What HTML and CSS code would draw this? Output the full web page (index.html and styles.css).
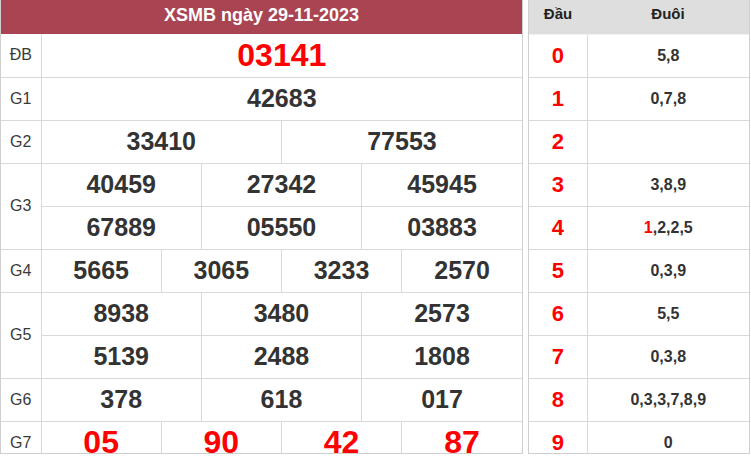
FILE: index.html
```html
<!DOCTYPE html>
<html lang="vi">
<head>
<meta charset="utf-8">
<title>XSMB ngày 29-11-2023</title>
<link rel="stylesheet" href="styles.css">
</head>
<body>
<div class="wrap">
  <div class="panel panel-main">
    <table class="kq">
      <colgroup>
        <col class="c-label">
        <col class="c-unit"><col class="c-unit"><col class="c-unit"><col class="c-unit">
        <col class="c-unit"><col class="c-unit"><col class="c-unit"><col class="c-unit">
        <col class="c-unit"><col class="c-unit"><col class="c-unit"><col class="c-unit">
      </colgroup>
      <thead>
        <tr class="head-row"><th colspan="13" class="title">XSMB ngày 29-11-2023</th></tr>
      </thead>
      <tbody>
        <tr><td class="lbl">ĐB</td><td colspan="12" class="num big red">03141</td></tr>
        <tr><td class="lbl">G1</td><td colspan="12" class="num">42683</td></tr>
        <tr><td class="lbl">G2</td><td colspan="6" class="num">33410</td><td colspan="6" class="num">77553</td></tr>
        <tr><td class="lbl" rowspan="2">G3</td><td colspan="4" class="num">40459</td><td colspan="4" class="num">27342</td><td colspan="4" class="num">45945</td></tr>
        <tr><td colspan="4" class="num">67889</td><td colspan="4" class="num">05550</td><td colspan="4" class="num">03883</td></tr>
        <tr><td class="lbl">G4</td><td colspan="3" class="num">5665</td><td colspan="3" class="num">3065</td><td colspan="3" class="num">3233</td><td colspan="3" class="num">2570</td></tr>
        <tr><td class="lbl" rowspan="2">G5</td><td colspan="4" class="num">8938</td><td colspan="4" class="num">3480</td><td colspan="4" class="num">2573</td></tr>
        <tr><td colspan="4" class="num">5139</td><td colspan="4" class="num">2488</td><td colspan="4" class="num">1808</td></tr>
        <tr><td class="lbl">G6</td><td colspan="4" class="num">378</td><td colspan="4" class="num">618</td><td colspan="4" class="num">017</td></tr>
        <tr><td class="lbl">G7</td><td colspan="3" class="num big red">05</td><td colspan="3" class="num big red">90</td><td colspan="3" class="num big red">42</td><td colspan="3" class="num big red">87</td></tr>
      </tbody>
    </table>
  </div>
  <div class="panel panel-side">
    <table class="loto">
      <colgroup><col class="c-dau"><col class="c-duoi"></colgroup>
      <thead>
        <tr class="head-row"><th>Đầu</th><th>Đuôi</th></tr>
      </thead>
      <tbody>
        <tr><td class="dau">0</td><td class="duoi">5,8</td></tr>
        <tr><td class="dau">1</td><td class="duoi">0,7,8</td></tr>
        <tr><td class="dau">2</td><td class="duoi"></td></tr>
        <tr><td class="dau">3</td><td class="duoi">3,8,9</td></tr>
        <tr><td class="dau">4</td><td class="duoi"><span class="red">1</span>,2,2,5</td></tr>
        <tr><td class="dau">5</td><td class="duoi">0,3,9</td></tr>
        <tr><td class="dau">6</td><td class="duoi">5,5</td></tr>
        <tr><td class="dau">7</td><td class="duoi">0,3,8</td></tr>
        <tr><td class="dau">8</td><td class="duoi">0,3,3,7,8,9</td></tr>
        <tr><td class="dau">9</td><td class="duoi">0</td></tr>
      </tbody>
    </table>
  </div>
</div>
</body>
</html>
```

FILE: styles.css
```css
* { box-sizing: border-box; }
html, body {
  margin: 0;
  padding: 0;
  background: #fff;
  font-family: "Liberation Sans", Arial, sans-serif;
  color: #333;
}
.wrap {
  display: flex;
  gap: 5px;
  width: 751px;
}
.panel {
  height: 454px;
  overflow: hidden;
  border: 1px solid #cfcfcf;
  border-top: 0;
}
.panel-main { width: 523px; }
.panel-side { width: 222px; }

table {
  width: 100%;
  border-collapse: collapse;
  table-layout: fixed;
}
.c-label { width: 40px; }
.c-unit { width: 40px; }
.c-dau { width: 58px; }
.c-duoi { width: auto; }

td {
  border: 1px solid #d9d9d9;
  height: 43px;
  padding: 0;
  text-align: center;
  vertical-align: middle;
}
tbody tr:first-child td { border-top: 0; }
td:first-child { border-left: 0; }
td:last-child { border-right: 0; }

.head-row th {
  height: 34px;
  padding: 0 0 3px;
  font-weight: bold;
  text-align: center;
  vertical-align: middle;
}
.title {
  background: #a94553;
  color: #fff;
  font-size: 18px;
}
.loto .head-row th {
  background: #dedede;
  color: #222;
  font-size: 15px;
  padding-bottom: 6px;
  border-bottom: 1px solid #f2f2f2;
}

.lbl {
  font-size: 16px;
  color: #3a3a3a;
}
.num {
  font-size: 25px;
  font-weight: bold;
  color: #333;
}
.num.big { font-size: 32px; }
.red { color: #f00; }
.num.red { color: #f00; }

.dau {
  font-size: 22px;
  font-weight: bold;
  color: #f00;
}
.duoi {
  font-size: 16px;
  font-weight: bold;
  color: #333;
}
```
